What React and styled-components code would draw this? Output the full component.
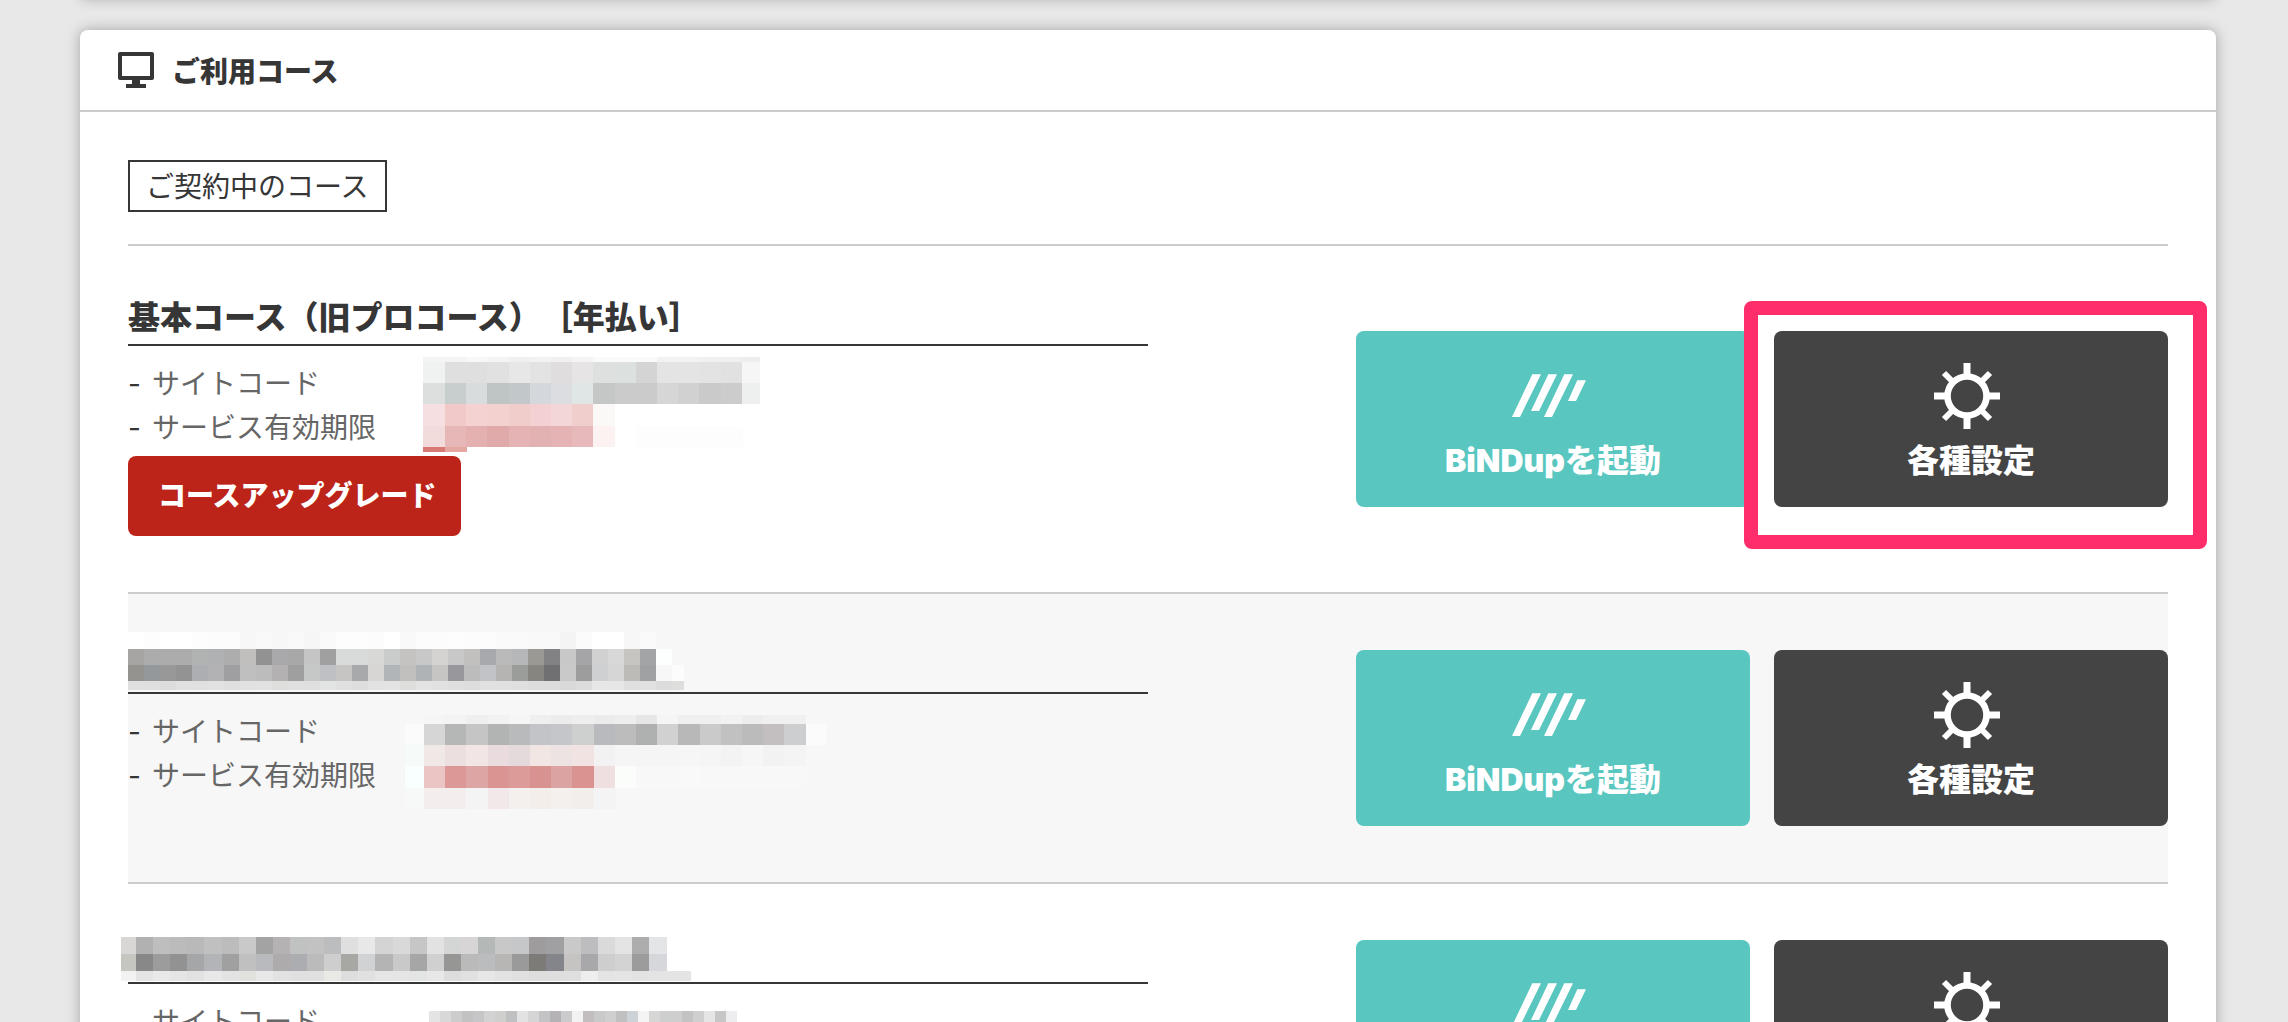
import React from "react";
import styled, { createGlobalStyle } from "styled-components";

const courses = [
  {
    id: "basic",
    title: "基本コース（旧プロコース）［年払い］",
    upgradable: true,
    highlighted: true,
    masks: [
      {
        left: 295,
        top: 55,
        first: 22,
        cell: 21.2,
        rows: [
          [5, "f4 f4 f8 f4 f0 f2 f0 f4 fa fa fa f2 f2 f0 f0 ed"],
          [21, "f0f1f1 df e0dfe0 e2e1e2 e7 e4e3e4 e0dddf e7e4e6 dee0e0 dce0de d4 e4 e4 e3 e1 f6"],
          [21, "dcdfde c8cecd d8dcdd bfc5c5 c2c7ca d4d8dc dcdde0 e0e5e6 c5c7c6 cb cb d6 d1 ca cc eef0ef"],
          [22, "f5dfe0 f2c9c9 f3d2d1 f3d1cf f0cccb f3d0d2 f3d6d8 f0cecb fbf8f8"],
          [21, "f2dbdb e7b7b8 e4b1b0 e1aaaa e5b3b3 e2b1b1 e6b3b5 e8b9ba fbf2f1 ff fd fd fd fd fd"],
          [5, "d67a73 e5a7a2"]
        ],
        width: 337
      }
    ]
  },
  {
    id: "second",
    shaded: true,
    masks: [
      {
        left: 0,
        top: -18,
        first: 16,
        cell: 16,
        rows: [
          [17, "ff fd ff ff fd fc fc f7 f9 f7 f9 f6 fa fd fd fc ff f9 fc fc fd fc fc fa fa f9 f9 f4 fb ff ff f7 fa"],
          [16, "a6a5a3 ac ac ac b0b3b1 b0b1b3 ad c0bfbd 92 a9a9ac a8 c5 a0 d9dbda d8dbd9 d8d8d6 c9cccb c4c3c1 c8 d4d3d1 c8 c2c0be a8a9ac ba b5b7b8 9a9994 828183 c8 a5a5a7 d1d1d2 d8 c6c5c2 a3a4a5 fdfefe f7"],
          [16, "949390 95989a 98 93 acaeb1 b2b2b5 9f9fa2 c0bfbf bdbcbd b4b1b2 a09f9f c5c8c7 bfc0c3 c6c5c3 a7a9ab d7d6d4 b2b5b7 c2c0be b0b3b5 c7c5c3 98979b bc c2c3c6 b6b4b3 9a9d9a 868580 707072 c9 9d cfd0d2 d6 bcbbb8 9fa1a3 f7 fc"],
          [9, "e0 df dd e1 e0 e2 df e1 e2 dededc e0 df e1e4e2 e0 de e2 e3 dededc e3 e1 df dd e1 e1 df dd dd d9 dc e7 e6 df e1 dc dededc"]
        ],
        width: 556
      },
      {
        left: 277,
        top: 65,
        first: 19,
        cell: 21.2,
        rows: [
          [9, "f7 f5 f3 ef f2 f6 ef ec ee eb ee e6 f5 ef ef f2 ed f0 f0 f7"],
          [21, "fb d6 b4b7b6 c5 b2b4b3 b8babc c2c4c7 c4c6c9 cdd0ce b8babd bc afb1b0 d1 b8 ca c1 bb c3bfc0 ccced0 fb"],
          [21, "f6faf9 efe8e6 ecdfe0 f2e5e5 eadcde e4dadb f2e6e5 eee3e3 f2e3e3 f3f2f3 f5 f5 f5 f6 f5 f3 f6 f2 f4"],
          [22, "f9fefe ebc5c3 dc9897 dea5a5 da9593 dc9a98 d89391 dca3a3 da9391 f0dfe0 fbfdfb f8 f8 f9 f8 f8 f8 f8 f8"],
          [21, "f6f9f8 f3eeed f3eeed f4 f2e8e9 f4f0ee f4eeea f4f0ee f2eeec f5f4f5"]
        ],
        width: 421
      }
    ]
  },
  {
    id: "third",
    masks: [
      {
        left: -7,
        top: -3,
        first: 15,
        cell: 17.1,
        rows: [
          [17, "d8d7d5 b1 be bb b9 c0 bc c9 a3 b5b2b3 bfc2c0 c2 bcbdbf df e8 d4 d9 c6 e2 d3d6d4 d7d5d6 b4b8b6 c8 c5c7c8 9f9c9e a0a0a2 c9 bdbdc0 da e4 ad e4e5e7"],
          [17, "c6c6c1 88 9c 92 a4a6a8 b2b4b8 a0 c0 b8babd aeabac abadb0 bb ce a7a7a4 d1d2d4 b4 c9 a6 d0 969795 ba bbbcbe b8b6b4 9a 7d7b78 84858a c5c4c2 a8a8aa ce d3 9c d5d7da"],
          [10, "f2 e4 e9 e5 e2 e8 e3 e1e1de e8 e2 e0 e0 e9e9e5 de e1 e6 e5 e3e5e5 e8 dd e1 e7 e3 e0 de de df ee e4 e5 e3 e4 e4 e4"]
        ],
        width: 570
      },
      {
        left: 301,
        top: 71,
        first: 11,
        cell: 11,
        rows: [
          [21, "e4 d8 cc c2 c6c6c8 d2 cfd0ce bfc0c2 e2 d5 c3c2c4 b5b2b5 cbcacc f2 c2bdbf c9 cf c0 cdd2d6 f4 d6d6d4 cccfcd ce c3 cf e5 c6 ededf0"]
        ],
        width: 308
      }
    ]
  }
];

// A two digit value is a grey, a six digit one a full colour.
const toColor = code => `#${code.length === 2 ? code.repeat(3) : code}`;

const Mosaic = ({ left, top, first, cell, rows, width }) => {
  const height = rows.reduce((sum, [h]) => sum + h, 0);
  let y = 0;

  return (
    <MosaicSvg $left={left} $top={top} width={width} height={height} aria-hidden="true">
      {rows.map(([h, colors], r) => {
        const rowY = y;
        y += h;
        return colors
          .split(" ")
          .map((code, c) => (
            <rect
              key={`${r}-${c}`}
              x={c === 0 ? 0 : Math.round(first + cell * (c - 1))}
              y={rowY}
              width={c === 0 ? first : Math.ceil(cell)}
              height={h}
              fill={toColor(code)}
            />
          ));
      })}
    </MosaicSvg>
  );
};

const MonitorIcon = () => (
  <svg width="36" height="36" viewBox="0 0 36 36" fill="#363636" aria-hidden="true">
    <path
      fillRule="evenodd"
      d="M2 0h32a2 2 0 0 1 2 2v24a2 2 0 0 1-2 2H22v4h6v4H8v-4h6v-4H2a2 2 0 0 1-2-2V2a2 2 0 0 1 2-2zm2 4v20h28V4z"
    />
  </svg>
);

const BindIcon = () => (
  <svg width="74" height="66" viewBox="0 0 74 66" fill="#fff" aria-hidden="true">
    <path d="M20.3 11.3H29L8 54H0zM36.3 11.3H45L27 48H19zM52.3 11.3H61L40 54H32zM65.3 17.3H74L64 38H56z" />
  </svg>
);

const GearIcon = () => (
  <svg width="66" height="66" viewBox="0 0 66 66" fill="none" stroke="#fff" aria-hidden="true">
    <circle cx="33" cy="33" r="19.5" strokeWidth="6.6" />
    <path strokeWidth="7" d="M33 0v12M33 54v12M0 33h12M54 33h12" />
    <path strokeWidth="6" d="M10 10l8 8M48 48l8 8M56 10l-8 8M18 48l-8 8" />
  </svg>
);

const Course = ({ title, upgradable, highlighted, shaded, masks }) => (
  <CourseRow $shaded={shaded}>
    <Details>
      <CourseTitle>{title}</CourseTitle>
      <InfoList>
        {["サイトコード", "サービス有効期限"].map(label => (
          <InfoItem key={label}>
            <Dash>-</Dash>
            {label}
          </InfoItem>
        ))}
      </InfoList>
      {masks.map((mask, i) => (
        <Mosaic key={i} {...mask} />
      ))}
      {upgradable && <UpgradeButton type="button">コースアップグレード</UpgradeButton>}
    </Details>
    <Actions>
      <ActionButton type="button" $color="#5ac6c0">
        <BindIcon />
        BiNDupを起動
      </ActionButton>
      <ActionSlot>
        <ActionButton type="button" $color="#444">
          <GearIcon />
          各種設定
        </ActionButton>
        {highlighted && <Highlight />}
      </ActionSlot>
    </Actions>
  </CourseRow>
);

const App = () => (
  <Page>
    <GlobalStyle />
    <PreviousPanel />
    <Panel>
      <PanelHeader>
        <MonitorIcon />
        <PanelTitle>ご利用コース</PanelTitle>
      </PanelHeader>
      <PanelBody>
        <SectionHead>
          <SectionLabel>ご契約中のコース</SectionLabel>
        </SectionHead>
        {courses.map(({ id, ...course }) => (
          <Course key={id} {...course} />
        ))}
      </PanelBody>
    </Panel>
  </Page>
);

export default App;

const GlobalStyle = createGlobalStyle`
  *,
  *::before,
  *::after {
    box-sizing: border-box;
  }

  body {
    margin: 0;
    background-color: #e8e8e8;
    color: #363636;
    font-family: Inter, "Noto Sans CJK JP", sans-serif;
    font-size: 28px;
    text-spacing-trim: space-all;
  }

  button {
    border: 0;
    padding: 0;
    color: #fff;
    font-family: inherit;
    cursor: pointer;
  }
`;

const Page = styled.main`
  display: flex;
  flex-direction: column;
  gap: 32px;
  height: 100vh;
  padding: 0 72px 0 80px;
  overflow: hidden;
`;

const Panel = styled.section`
  flex-shrink: 0;
  border-radius: 8px;
  background-color: #fff;
  box-shadow: 0 0 14px rgba(0, 0, 0, 0.3);
`;

const PreviousPanel = styled(Panel)`
  height: 40px;
  margin-top: -42px;
`;

const PanelHeader = styled.header`
  display: flex;
  align-items: center;
  gap: 18px;
  height: 82px;
  padding: 0 38px;
  border-bottom: 2px solid #ccc;
`;

const PanelTitle = styled.h2`
  margin: 0;
  padding-top: 4px;
  font-size: 28px;
  font-weight: 900;
  line-height: 40px;
`;

const PanelBody = styled.div`
  padding: 48px 48px 0;
`;

const SectionHead = styled.div`
  padding-bottom: 32px;
  border-bottom: 2px solid #ccc;
`;

const SectionLabel = styled.h3`
  width: fit-content;
  margin: 0;
  padding: 2px 16px 0;
  border: 2px solid #363636;
  font-size: 28px;
  font-weight: 400;
  line-height: 46px;
`;

const CourseRow = styled.article`
  display: flex;
  justify-content: space-between;
  padding: 56px 0;
  border-bottom: 2px solid #ccc;
  background-color: ${({ $shaded }) => ($shaded ? "#f7f7f7" : "#fff")};
`;

const Details = styled.div`
  position: relative;
  width: 50%;
`;

const CourseTitle = styled.h4`
  height: 44px;
  margin: 0 0 16px;
  border-bottom: 2px solid #363636;
  font-size: 32px;
  font-weight: 900;
  line-height: 32px;
`;

const InfoList = styled.ul`
  margin: 0;
  padding: 0;
  list-style: none;
`;

const InfoItem = styled.li`
  display: flex;
  color: #666;
  line-height: 44px;
`;

const Dash = styled.span`
  width: 24px;
  color: #363636;
`;

const UpgradeButton = styled.button`
  height: 80px;
  margin-top: 6px;
  padding: 0 24px 4px 30px;
  border-radius: 8px;
  background-color: #bd2419;
  font-size: 28px;
  font-weight: 900;
`;

const Actions = styled.div`
  display: flex;
  align-items: center;
  gap: 24px;
`;

const ActionSlot = styled.div`
  position: relative;
`;

const ActionButton = styled.button`
  display: flex;
  flex-direction: column;
  align-items: center;
  gap: 14px;
  width: 394px;
  height: 176px;
  padding-top: 32px;
  border-radius: 8px;
  background-color: ${({ $color }) => $color};
  font-size: 32px;
  font-weight: 900;
  line-height: 36px;

  & > svg {
    margin-right: 8px;
  }
`;

const Highlight = styled.div`
  position: absolute;
  inset: -30px -39px -42px -30px;
  border: 14px solid #ff2e6b;
  border-radius: 8px;
  pointer-events: none;
`;

const MosaicSvg = styled.svg`
  position: absolute;
  top: ${({ $top }) => $top}px;
  left: ${({ $left }) => $left}px;
  shape-rendering: crispEdges;
`;
